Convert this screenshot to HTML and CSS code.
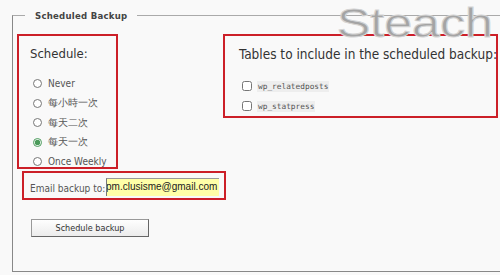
FILE: index.html
```html
<!DOCTYPE html>
<html lang="en">

<head>
    <meta charset="UTF-8">
    <meta name="viewport" content="width=device-width, initial-scale=1.0">
    <title>Scheduled Backup</title>
    <link rel="stylesheet" href="styles.css">
</head>

<body>
    <div class="watermark">Steach</div>
    <fieldset class="backup">
        <legend>Scheduled Backup</legend>
        <div class="row">
            <div class="box schedule">
                <h3>Schedule:</h3>
                <label class="opt"><input type="radio" name="freq"> Never</label>
                <label class="opt"><input type="radio" name="freq"> 每小時一次</label>
                <label class="opt"><input type="radio" name="freq"> 每天二次</label>
                <label class="opt"><input type="radio" name="freq" checked> 每天一次</label>
                <label class="opt"><input type="radio" name="freq"> Once Weekly</label>
            </div>
            <div class="box tables">
                <h3>Tables to include in the scheduled backup:</h3>
                <label class="tbl"><input type="checkbox"><code>wp_relatedposts</code></label>
                <label class="tbl"><input type="checkbox"><code>wp_statpress</code></label>
            </div>
        </div>
        <div class="box email">
            <span class="lbl">Email backup to:</span>
            <div class="field"><span>pm.clusisme@gmail.com</span></div>
        </div>
        <button class="submit" type="button">Schedule backup</button>
    </fieldset>
</body>

</html>
```

FILE: styles.css
```css
* {
    margin: 0;
    padding: 0;
    box-sizing: border-box;
}

body {
    background: #f9f9f9;
    color: #333;
    font-family: "DejaVu Sans Condensed", "DejaVu Sans", Verdana, sans-serif;
    font-stretch: condensed;
    font-size: 11px;
    width: 500px;
    height: 275px;
    overflow: hidden;
    position: relative;
    padding: 10px 0 0 12px;
}

.backup {
    width: 520px;
    height: 262px;
    border: 1px solid #888;
    border-top-color: #aaa;
    border-right: none;
    padding: 0 0 0 4px;
}

legend {
    margin-left: 8px;
    padding: 0 10px;
    font-size: 9.5px;
    letter-spacing: 0.25px;
    font-weight: bold;
    color: #444;
}

.row {
    display: flex;
    align-items: flex-start;
    margin-top: 13px;
}

.box {
    border: 2px solid #cc1f28;
}

.box h3 {
    font-weight: normal;
    font-size: 13px;
    color: #333;
    white-space: nowrap;
}

.schedule {
    width: 101px;
    height: 135px;
    padding: 10px 0 0 11px;
}

.schedule h3 {
    margin-bottom: 13px;
}

.opt {
    display: flex;
    align-items: center;
    height: 19.5px;
    font-size: 10px;
    color: #555;
}

.opt input {
    width: 9px;
    height: 9px;
    margin: 0 6px 0 3px;
    accent-color: #4a9a5a;
}

.tables {
    margin-left: 105px;
    width: 275px;
    height: 84px;
    padding: 10px 0 0 14px;
}

.tables h3 {
    font-size: 13.5px;
    margin-bottom: 14px;
}

.tbl {
    display: flex;
    align-items: center;
    height: 20px;
}

.tbl input {
    width: 10px;
    height: 10px;
    margin: 0 5px 0 3px;
}

.tbl code {
    font-family: "DejaVu Sans Mono", monospace;
    font-size: 7.8px;
    background: #eee;
    color: #555;
    padding: 1px 1px;
}

.email {
    display: flex;
    align-items: flex-start;
    width: 204px;
    height: 29px;
    margin: 2px 0 0 5px;
    padding: 5px 0 0 6px;
    font-size: 10px;
    color: #555;
}

.lbl {
    margin-top: 5px;
    width: 76px;
}

.field {
    width: 113px;
    height: 18px;
    background: #ffffa8;
    border-left: 1px solid #777;
    border-top: 1px solid #999;
    overflow: hidden;
    white-space: nowrap;
    font-family: "Liberation Sans", Arial, sans-serif;
    font-size: 10px;
    color: #222;
    line-height: 15px;
}

.field span {
    margin-left: -1px;
}

.submit {
    display: block;
    width: 118px;
    height: 18px;
    margin: 19px 0 0 14px;
    background: linear-gradient(#fefefe, #ececec);
    border: 1px solid #666;
    border-top-color: #999;
    border-left-color: #999;
    font-family: "DejaVu Sans Condensed", "DejaVu Sans", Verdana, sans-serif;
    font-stretch: condensed;
    font-size: 9px;
    color: #333;
}

.watermark {
    position: absolute;
    left: 337px;
    top: 3px;
    font-family: "Liberation Sans", Arial, sans-serif;
    font-size: 41px;
    line-height: 1;
    color: #a4a4a4;
    -webkit-text-stroke: 1px #d4d4d4;
    z-index: 2;
    transform: scaleX(1.22);
    transform-origin: left top;
}
```
